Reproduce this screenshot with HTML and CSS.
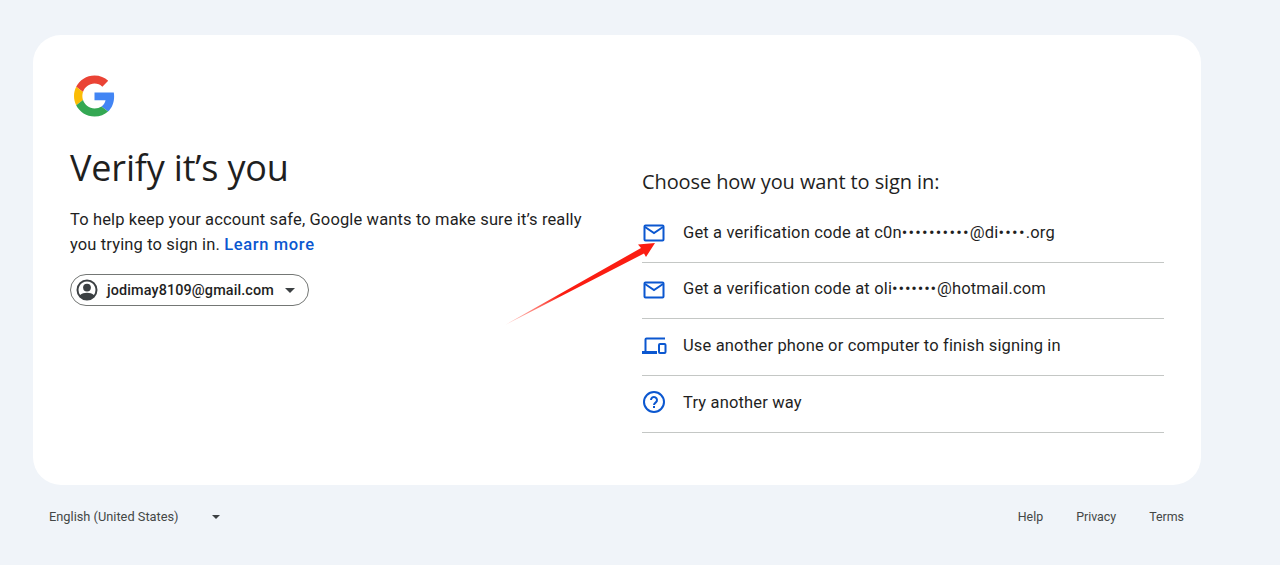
FILE: index.html
```html
<!DOCTYPE html>
<html lang="en">
<head>
<meta charset="utf-8">
<title>Verify it's you</title>
<link rel="stylesheet" href="styles.css">
</head>
<body>
<main class="card">
  <section class="left">
    <svg class="logo" viewBox="0 0 48 48" aria-label="Google">
      <path fill="#EA4335" d="M24 9.5c3.54 0 6.71 1.22 9.21 3.6l6.85-6.85C35.9 2.38 30.47 0 24 0 14.62 0 6.51 5.38 2.56 13.22l7.98 6.19C12.43 13.72 17.74 9.5 24 9.5z"/>
      <path fill="#4285F4" d="M46.98 24.55c0-1.57-.15-3.09-.38-4.55H24v9.02h12.94c-.58 2.96-2.26 5.48-4.78 7.18l7.73 6c4.51-4.18 7.09-10.36 7.09-17.65z"/>
      <path fill="#FBBC05" d="M10.53 28.59c-.48-1.45-.76-2.99-.76-4.59s.27-3.14.76-4.59l-7.98-6.19C.92 16.46 0 20.12 0 24c0 3.88.92 7.54 2.56 10.78l7.97-6.19z"/>
      <path fill="#34A853" d="M24 48c6.48 0 11.93-2.13 15.89-5.81l-7.73-6c-2.15 1.45-4.92 2.3-8.16 2.3-6.26 0-11.57-4.22-13.47-9.91l-7.98 6.19C6.51 42.62 14.62 48 24 48z"/>
    </svg>
    <h1 class="title">Verify it’s you</h1>
    <p class="intro">To help keep your account safe, Google wants to make sure it’s really you trying to sign in. <a class="link" href="#">Learn more</a></p>
    <div class="account">
      <svg class="avatar" viewBox="0 0 24 24"><path fill="#3c4043" d="M12 1.500a10.500 10.500 0 1 0 0 21 10.500 10.500 0 0 0 0-21zm0 2a8.500 8.500 0 0 1 6.900 13.400c-1.700-1.400-4.200-2.100-6.900-2.100s-5.200.7-6.900 2.100A8.500 8.500 0 0 1 12 3.500z"/><path fill="#3c4043" d="M5.500 18c1.600-1.600 4-2.300 6.500-2.300s4.900.7 6.500 2.300a9 9 0 0 1-13 0z"/><circle fill="#3c4043" cx="12" cy="9.600" r="3.900"/></svg>
      <span class="email">jodimay8109@gmail.com</span>
      <span class="caret"></span>
    </div>
  </section>
  <section class="right">
    <h2 class="choose">Choose how you want to sign in:</h2>
    <ul class="options">
      <li class="option">
        <svg class="icon" viewBox="0 0 24 24"><rect class="glyph" x="2.500" y="5.500" width="19" height="15" rx="1"/><path class="glyph" d="M3 7l9 6 9-6"/></svg>
        <span>Get a verification code at c0n<span class="dots">••••••••••</span>@di<span class="dots">••••</span>.org</span>
      </li>
      <li class="option">
        <svg class="icon" viewBox="0 0 24 24"><rect class="glyph" x="2.500" y="5.500" width="19" height="15" rx="1"/><path class="glyph" d="M3 7l9 6 9-6"/></svg>
        <span>Get a verification code at oli<span class="dots dots-tight">•••••••</span>@hotmail.com</span>
      </li>
      <li class="option">
        <svg class="icon icon-wide" viewBox="0 0 26 24"><path class="glyph" d="M3.500 18V6.500a1 1 0 0 1 1-1H23"/><path fill="#0b57d0" d="M0 18h15v3H0z"/><rect class="glyph" x="17" y="11" width="6.500" height="9" rx="1"/></svg>
        <span>Use another phone or computer to finish signing in</span>
      </li>
      <li class="option">
        <svg class="icon" viewBox="0 0 24 24"><circle class="glyph" cx="12" cy="12" r="10"/><path fill="#0b57d0" d="M11 16h2v2h-2v-2z"/><path class="glyph" d="M9 10a3 3 0 1 1 4.800 2.400c-1.200.9-1.800 1.500-1.800 2.600"/></svg>
        <span>Try another way</span>
      </li>
    </ul>
  </section>
</main>
<footer class="footer">
  <div class="lang"><span>English (United States)</span><span class="caret"></span></div>
  <nav class="links"><a href="#">Help</a><a href="#">Privacy</a><a href="#">Terms</a></nav>
</footer>
<svg class="arrow" viewBox="0 0 1280 565" aria-hidden="true">
  <defs><linearGradient id="fade" gradientUnits="userSpaceOnUse" x1="505" y1="325" x2="560" y2="294"><stop offset="0" stop-color="#ff5a4a" stop-opacity="0.3"/><stop offset="1" stop-color="#fb1d12"/></linearGradient></defs>
  <polygon fill="url(#fade)" points="505,325 641,248 638,244.500 655,243 646,257 644,253.500"/>
</svg>
</body>
</html>
```
FILE: styles.css
```css
* { box-sizing: border-box; }
html, body { margin: 0; padding: 0; }
body {
  position: relative;
  height: 565px;
  overflow: hidden;
  background: #f0f4f9;
  padding: 35px 79px 0 33px;
  font-family: Roboto, "Liberation Sans", sans-serif;
  color: #1f1f1f;
}
.card {
  display: grid;
  grid-template-columns: 572px 522px;
  height: 450px;
  padding: 40px 37px 0;
  background: #fff;
  border-radius: 28px;
}
.logo { display: block; width: 41px; height: 42px; margin-left: 3.500px; }
.title {
  margin: 29px 0 0;
  font: 400 36px/44px "Open Sans", sans-serif;
  letter-spacing: -0.17px;
}
.intro {
  width: 530px;
  margin: 17px 0 0;
  font-size: 16.5px;
  line-height: 25px;
  letter-spacing: 0.135px;
}
.link { color: #0b57d0; font-weight: 500; letter-spacing: 0.65px; text-decoration: none; }
.account {
  display: inline-flex;
  align-items: center;
  width: 239px;
  height: 32px;
  margin-top: 17px;
  padding: 0 9px 0 4px;
  border: 1px solid #747775;
  border-radius: 16px;
  font-size: 14.4px;
  font-weight: 500;
}
.avatar { width: 24px; height: 24px; flex: none; }
.email { margin-left: 8px; letter-spacing: 0.12px; }
.caret {
  width: 0;
  height: 0;
  margin-left: 11px;
  border: 5px solid transparent;
  border-top-color: #3c4043;
  border-bottom: 0;
}
.choose {
  margin: 93px 0 0;
  font: 400 20px/28px "Open Sans", sans-serif;
  letter-spacing: -0.1px;
}
.options { margin: 10px 0 0; padding: 0; list-style: none; }
.option {
  display: flex;
  align-items: center;
  gap: 17px;
  height: 56.67px;
  padding-bottom: 3.500px;
  border-bottom: 1px solid #c4c7c5;
  font-size: 16.5px;
  letter-spacing: 0.16px;
}
.dots { letter-spacing: 1.25px; }
.dots-tight { letter-spacing: 0.85px; }
.glyph { fill: none; stroke: #0b57d0; stroke-width: 2; }
.icon { width: 24px; height: 24px; flex: none; }
.icon-wide { width: 26px; margin-right: -2px; }
.footer {
  display: flex;
  justify-content: space-between;
  align-items: center;
  margin-top: 22px;
  padding: 0 17px 0 16px;
  font-size: 12.8px;
  line-height: 20px;
  color: #444746;
}
.lang { display: flex; align-items: center; }
.lang .caret { margin-left: 33px; border-width: 4.500px; border-bottom: 0; }
.links { display: flex; gap: 33px; font-size: 12.4px; }
.links a { color: inherit; text-decoration: none; }
.arrow { position: absolute; left: 0; top: 0; width: 1280px; height: 565px; pointer-events: none; }
```
